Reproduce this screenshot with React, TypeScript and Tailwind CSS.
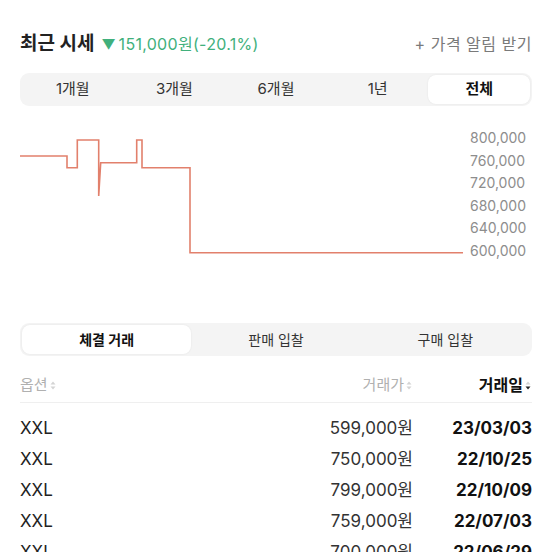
import React from "react";

const FONT = "font-['Inter','Noto_Sans_CJK_KR',sans-serif]";

const PERIODS = ["1개월", "3개월", "6개월", "1년", "전체"];
const TRADE_TABS = ["체결 거래", "판매 입찰", "구매 입찰"];
const AXIS = ["800,000", "760,000", "720,000", "680,000", "640,000", "600,000"];

const TRADES = [
  { option: "XXL", price: "599,000원", date: "23/03/03" },
  { option: "XXL", price: "750,000원", date: "22/10/25" },
  { option: "XXL", price: "799,000원", date: "22/10/09" },
  { option: "XXL", price: "759,000원", date: "22/07/03" },
  { option: "XXL", price: "700,000원", date: "22/06/29" },
];

function SortIcon({ active }: { active?: boolean }) {
  return (
    <svg width="8" height="11" viewBox="0 0 8 11" className="ml-[1px]">
      <path d="M4 1.5 L6.5 4.5 H1.5 Z" fill="#d4d4d4" />
      <path d="M4 9.5 L6.5 6.5 H1.5 Z" fill={active ? "#222" : "#d4d4d4"} />
    </svg>
  );
}

export default function App() {
  return (
    <div className={`w-[552px] h-[552px] overflow-hidden bg-white px-5 ${FONT}`}>
      {/* Title */}
      <div className="flex items-center justify-between pt-[32px] h-[56px]">
        <div className="flex items-center">
          <span className="text-[19px] leading-[24px] font-bold text-[#222]">최근 시세</span>
          <span className="ml-[7px] text-[14px] text-[#41b07c]">▼</span>
          <span className="ml-[3px] text-[16px] leading-[24px] tracking-[0.3px] text-[#41b07c]">151,000원(-20.1%)</span>
        </div>
        <span className="text-[16px] leading-[24px] tracking-[0.5px] text-[#7a7a7a]">+ 가격 알림 받기</span>
      </div>

      {/* Period tabs */}
      <div className="mt-[17px] h-[33px] rounded-[9px] bg-[#f4f4f4] p-[2px] grid grid-cols-5">
        {PERIODS.map((p) => (
          <div
            key={p}
            className={`flex items-center justify-center rounded-[8px] text-[15px] ${
              p === "전체" ? "bg-white font-bold text-[#111] shadow-[0_0_2px_rgba(0,0,0,0.08)]" : "text-[#333]"
            }`}
          >
            {p}
          </div>
        ))}
      </div>

      {/* Chart */}
      <div className="mt-[12px] h-[160px] flex">
        <svg width="443" height="160" viewBox="0 0 443 160">
          <path
            d="M0 38 H47 V49.7 H57.3 V22 H78.7 V78 L80.7 44.7 H116.7 V22 H122 V49.7 H170 V134.7 H443"
            fill="none"
            stroke="#e2806c"
            strokeWidth="1.6"
          />
        </svg>
        <div className="ml-[7px] pt-[9px] flex flex-col text-[14px] leading-[22.5px] text-[#8d8d8d]">
          {AXIS.map((a) => (
            <span key={a}>{a}</span>
          ))}
        </div>
      </div>

      {/* Trade tabs */}
      <div className="mt-[45px] h-[33px] rounded-[9px] bg-[#f4f4f4] p-[2px] grid grid-cols-3">
        {TRADE_TABS.map((t, i) => (
          <div
            key={t}
            className={`flex items-center justify-center rounded-[8px] text-[14px] ${
              i === 0 ? "bg-white font-bold text-[#111] shadow-[0_0_2px_rgba(0,0,0,0.08)]" : "text-[#333]"
            }`}
          >
            {t}
          </div>
        ))}
      </div>

      {/* Table header */}
      <div className="mt-[12px] h-[35px] flex items-center border-b border-[#efefef]">
        <div className="flex-1 flex items-center text-[15px] text-[#b0b0b0]">
          옵션
          <SortIcon />
        </div>
        <div className="flex items-center justify-end text-[15px] text-[#b0b0b0]">
          거래가
          <SortIcon />
        </div>
        <div className="w-[119px] flex items-center justify-end text-[16px] font-bold text-[#111]">
          거래일
          <SortIcon active />
        </div>
      </div>

      {/* Rows */}
      <div className="pt-[10px]">
        {TRADES.map((r, i) => (
          <div key={i} className="h-[31px] flex items-center text-[17px]">
            <div className="flex-1 text-[#222]">{r.option}</div>
            <div className="text-right text-[#333]">{r.price}</div>
            <div className="w-[119px] text-right font-bold text-[#111]">{r.date}</div>
          </div>
        ))}
      </div>
    </div>
  );
}
